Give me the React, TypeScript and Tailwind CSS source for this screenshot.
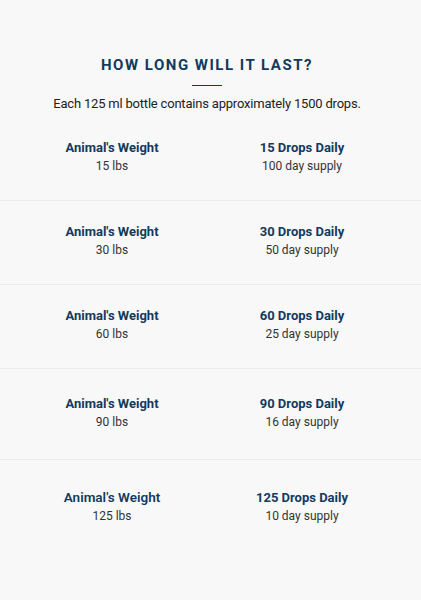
import React from "react";

const rows = [
  { w: "15 lbs", d: "15 Drops Daily", s: "100 day supply", pt: "pt-[25px]", pb: "pb-[24px]", big: false },
  { w: "30 lbs", d: "30 Drops Daily", s: "50 day supply", pt: "pt-[21px]", pb: "pb-[24px]", big: false },
  { w: "60 lbs", d: "60 Drops Daily", s: "25 day supply", pt: "pt-[21px]", pb: "pb-[24px]", big: false },
  { w: "90 lbs", d: "90 Drops Daily", s: "16 day supply", pt: "pt-[25px]", pb: "pb-[27px]", big: false },
  { w: "125 lbs", d: "125 Drops Daily", s: "10 day supply", pt: "pt-[28px]", pb: "pb-[28px]", big: true },
];

export default function App() {
  return (
    <div
      className="w-[421px] h-[600px] bg-[#f8f8f8] overflow-hidden"
      style={{ fontFamily: "Roboto, 'Liberation Sans', sans-serif" }}
    >
      <div className="w-[414px] pt-[55px] flex flex-col items-center">
        <h2 className="text-[15px] leading-[20px] font-bold tracking-[1.5px] text-[#123a5e]">
          HOW LONG WILL IT LAST?
        </h2>
        <div className="mt-[10px] w-[30px] h-px bg-[#123a5e]" />
        <p className="mt-[9px] text-[13px] leading-[18px] tracking-[-0.2px] text-[#222]">
          Each 125 ml bottle contains approximately 1500 drops.
        </p>
      </div>
      <div>
        {rows.map((r, i) => (
          <div
            key={i}
            className={`${r.pt} ${r.pb} ${i < rows.length - 1 ? "border-b border-[#ececec]" : ""}`}
          >
            <div className="grid grid-cols-2 px-[17px] w-[414px] text-center">
              <div>
                <div
                  className={`${r.big ? "text-[13.5px] font-semibold" : "text-[13px] font-bold"} leading-[19px] text-[#123a5e]`}
                >
                  Animal's Weight
                </div>
                <div className="text-[12px] leading-[19px] text-[#333]">{r.w}</div>
              </div>
              <div>
                <div className="text-[13px] leading-[19px] font-bold text-[#123a5e]">{r.d}</div>
                <div className="text-[12px] leading-[19px] text-[#333]">{r.s}</div>
              </div>
            </div>
          </div>
        ))}
      </div>
    </div>
  );
}
